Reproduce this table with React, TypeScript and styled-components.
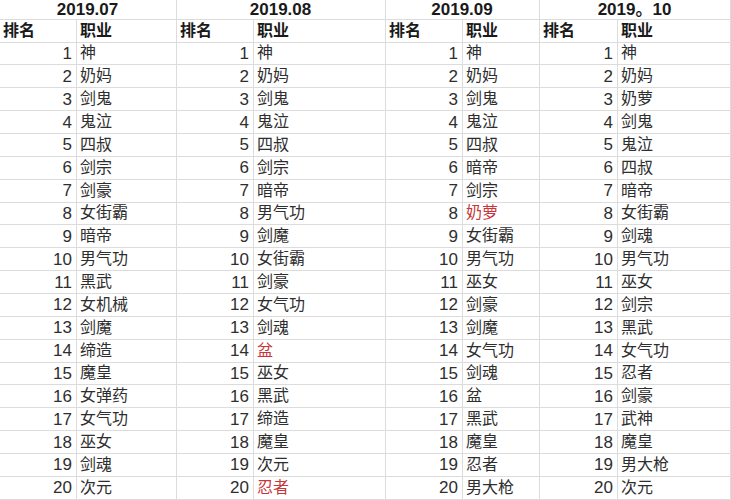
import React from "react";
import styled, { createGlobalStyle } from "styled-components";

const Global = createGlobalStyle`
  html, body { margin: 0; padding: 0; background: #ffffff; }
  * { box-sizing: border-box; }
`;

const Sheet = styled.div`
  display: grid;
  grid-template-columns: 77px 100px 77px 132px 77px 77px 78px 1fr;
  grid-template-rows: 20px 22.5px repeat(20, 22.87px);
  width: 731px;
  height: 500px;
  overflow: hidden;
  font-family: "Liberation Sans", "Noto Sans CJK SC", sans-serif;
  font-size: 16px;
  color: #333333;
  background: #ffffff;
`;

const Cell = styled.div<{
  $align?: "left" | "right" | "center";
  $bold?: boolean;
  $red?: boolean;
  $span?: number;
  $size?: number;
}>`
  grid-column: span ${(p) => p.$span ?? 1};
  display: flex;
  align-items: center;
  justify-content: ${(p) => (p.$align === "right" ? "flex-end" : p.$align === "center" ? "center" : "flex-start")};
  padding: 0 4px 0 3px;
  border-right: 1px solid #dcdcdc;
  border-bottom: 1px solid #dcdcdc;
  line-height: 1;
  white-space: nowrap;
  font-size: ${(p) => p.$size ?? 16}px;
  font-weight: ${(p) => (p.$bold ? 700 : 400)};
  color: ${(p) => (p.$red ? "#c8353a" : p.$bold ? "#1a1a1a" : "#2e2e2e")};
`;

type Item = { name: string; red?: boolean };
type Group = { title: string; items: Item[] };

const mk = (s: string, reds: string[] = []): Item[] =>
  s.split(" ").map((name) => ({ name, red: reds.includes(name) }));

const groups: Group[] = [
  { title: "2019.07", items: mk("神 奶妈 剑鬼 鬼泣 四叔 剑宗 剑豪 女街霸 暗帝 男气功 黑武 女机械 剑魔 缔造 魔皇 女弹药 女气功 巫女 剑魂 次元") },
  { title: "2019.08", items: mk("神 奶妈 剑鬼 鬼泣 四叔 剑宗 暗帝 男气功 剑魔 女街霸 剑豪 女气功 剑魂 盆 巫女 黑武 缔造 魔皇 次元 忍者", ["盆", "忍者"]) },
  { title: "2019.09", items: mk("神 奶妈 剑鬼 鬼泣 四叔 暗帝 剑宗 奶萝 女街霸 男气功 巫女 剑豪 剑魔 女气功 剑魂 盆 黑武 魔皇 忍者 男大枪", ["奶萝"]) },
  { title: "2019。10", items: mk("神 奶妈 奶萝 剑鬼 鬼泣 四叔 暗帝 女街霸 剑魂 男气功 巫女 剑宗 黑武 女气功 忍者 剑豪 武神 魔皇 男大枪 次元") },
];

export default function App() {
  const rows: React.ReactNode[] = [];
  groups.forEach((g) =>
    rows.push(
      <Cell key={`t-${g.title}`} $span={2} $align="center" $bold $size={17}>
        {g.title}
      </Cell>
    )
  );
  groups.forEach((g, gi) => {
    rows.push(<Cell key={`h1-${gi}`} $bold>排名</Cell>);
    rows.push(<Cell key={`h2-${gi}`} $bold>职业</Cell>);
  });
  for (let r = 0; r < 20; r++) {
    groups.forEach((g, gi) => {
      const it = g.items[r];
      rows.push(
        <Cell key={`n-${r}-${gi}`} $align="right" $size={17}>
          {r + 1}
        </Cell>
      );
      rows.push(
        <Cell key={`v-${r}-${gi}`} $red={it.red}>
          {it.name}
        </Cell>
      );
    });
  }
  return (
    <>
      <Global />
      <Sheet>{rows}</Sheet>
    </>
  );
}
